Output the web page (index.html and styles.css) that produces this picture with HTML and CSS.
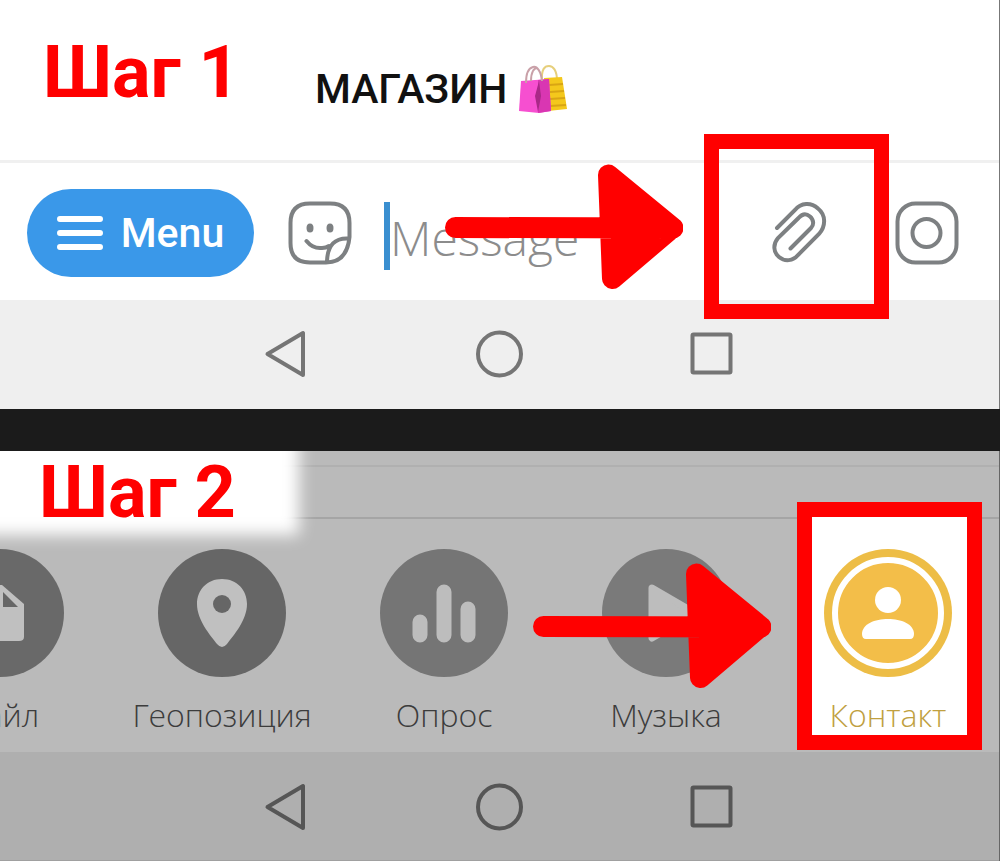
FILE: index.html
```html
<!DOCTYPE html>
<html lang="ru">
<head>
<meta charset="utf-8">
<title>Как отправить контакт</title>
<meta name="viewport" content="width=device-width, initial-scale=1">
<link rel="stylesheet" href="styles.css">
</head>
<body>
<svg class="defs" aria-hidden="true">
  <symbol id="arrow" viewBox="0 0 238 126">
    <path d="M10.500 63.500L228 64M163.500 11L227.500 63.500L167.500 114.500Z" fill="red" stroke="red" stroke-width="21" stroke-linecap="round" stroke-linejoin="round"/>
  </symbol>
  <symbol id="back" viewBox="0 0 48 48"><path d="M4.500 24L40 3V45Z"/></symbol>
  <symbol id="home" viewBox="0 0 48 48"><circle cx="23.500" cy="24" r="21.500"/></symbol>
  <symbol id="recent" viewBox="0 0 48 48"><rect x="4.500" y="4.500" width="38" height="38" rx="1"/></symbol>
</svg>

<main class="guide">
  <section class="panel">
    <header class="chat">
      <h1 class="step">Шаг 1</h1>
      <p class="shop">МАГАЗИН
        <svg class="bags" viewBox="0 0 50 50" role="img" aria-label="Пакеты">
          <path d="M25 19C24 4 28 2 32 2s8 4 8 15" fill="none" stroke="#e6cf7c" stroke-width="2"/>
          <path d="M27 14L45 13L50 45L31 47Z" fill="#f4c81c"/>
          <path d="M32 21l14-1M33 28l14-1M33 35l15-1M33 42l16-1" stroke="#d9a514" stroke-width="2"/>
          <path d="M4 17L32 15L34 47L22 49L2 47Z" fill="#f64fd0"/>
          <path d="M21 16L32 15L34 47L21 49Z" fill="#d936b2"/>
          <path d="M22 17L24 32L21 48L18 32Z" fill="#a92888"/>
          <path d="M9 19C9 8 12 4 16 3s8 4 9 14M14 17C14 8 17 4 20 4" fill="none" stroke="#c9a0a8" stroke-width="2"/>
        </svg>
      </p>
    </header>
    <form class="compose">
      <button class="menu" type="button">
        <svg class="burger" viewBox="0 0 46 36" aria-hidden="true"><path d="M3 4H43M3 18H43M3 32H43"/></svg>
        Menu
      </button>
      <button class="tool sticker" type="button" aria-label="Стикеры">
        <svg viewBox="0 0 64 64"><path d="M22 2.500H42Q61.500 2.500 61.500 22V36Q59 61.500 38 61.500H22Q2.500 61.500 2.500 42V22Q2.500 2.500 22 2.500ZM61 37.500Q40 36 39 60M18.500 40Q25 48 34 47Q38 47 41 45"/><ellipse class="solid" cx="22" cy="27" rx="3.500" ry="4.500"/><ellipse class="solid" cx="42" cy="27" rx="3.500" ry="4.500"/></svg>
      </button>
      <input class="message" type="text" placeholder="Message" aria-label="Message">
      <button class="tool clip" type="button" aria-label="Прикрепить">
        <svg viewBox="0 0 64 64"><path d="M8 27L26 9C32 1.500 42 1 49 7.500C57 14 57 25 50 33L29 54C24 60 16 61 10 56C4 51 4 43 9 37L29.500 17C33 13 37 12 41 15.500C45 19 45 24 42 27L21.500 47.500"/></svg>
      </button>
      <button class="tool" type="button" aria-label="Камера">
        <svg viewBox="0 0 64 64"><rect x="2.500" y="2.500" width="59" height="59" rx="18"/><circle cx="31.500" cy="32" r="14"/></svg>
      </button>
    </form>
    <nav class="system" aria-label="Навигация">
      <button type="button" aria-label="Назад"><svg><use href="#back"/></svg></button>
      <button type="button" aria-label="Домой"><svg><use href="#home"/></svg></button>
      <button type="button" aria-label="Недавние"><svg><use href="#recent"/></svg></button>
    </nav>
    <div class="frame frame-clip"></div>
    <svg class="arrow arrow-clip" aria-hidden="true"><use href="#arrow"/></svg>
  </section>

  <section class="panel dim">
    <div class="strip"></div>
    <div class="bar"></div>
    <div class="label-patch"><h2 class="step">Шаг 2</h2></div>
    <div class="attach">
      <button class="item" type="button">
        <svg class="disc" viewBox="0 0 128 128"><circle cx="64" cy="64" r="64" fill="#696969"/><path d="M47 36H66L88 55V88Q88 92 83 92H46Q40 92 40 87V42Q40 36 47 36Z" fill="#c0c0c0"/><path d="M67 43V58H82Z" fill="#666"/></svg>
        Файл
      </button>
      <button class="item" type="button">
        <svg class="disc" viewBox="0 0 128 128"><circle cx="64" cy="64" r="64" fill="#666"/><path d="M64 30C79 30 89 41 89 55C89 71 76 86 69 95Q64 101 59 95C52 86 39 71 39 55C39 41 49 30 64 30Z" fill="#c0c0c0"/><circle cx="64" cy="55" r="9" fill="#666"/></svg>
        Геопозиция
      </button>
      <button class="item" type="button">
        <svg class="disc" viewBox="0 0 128 128"><circle cx="64" cy="64" r="64" fill="#757575"/><path d="M40 73V86M64 43V86M88 60V86" stroke="#bdbdbd" stroke-width="15" stroke-linecap="round"/></svg>
        Опрос
      </button>
      <button class="item" type="button">
        <svg class="disc" viewBox="0 0 128 128"><circle cx="64" cy="64" r="64" fill="#7a7a7a"/><path d="M50 39L93 64L50 89Z" fill="#bdbdbd" stroke="#bdbdbd" stroke-width="7" stroke-linejoin="round"/></svg>
        Музыка
      </button>
      <button class="item contact" type="button">
        <svg class="disc" viewBox="0 0 128 128"><circle cx="64" cy="64" r="64" fill="#edbd46"/><circle cx="64" cy="64" r="53" fill="#f3be49" stroke="#fff" stroke-width="6"/><circle cx="64" cy="51" r="13" fill="#fff"/><path d="M38 85C38 75 51 70 64 70S90 75 90 85Q90 90 86 90H42Q38 90 38 85Z" fill="#fff"/></svg>
        Контакт
      </button>
    </div>
    <nav class="system" aria-label="Навигация">
      <button type="button" aria-label="Назад"><svg><use href="#back"/></svg></button>
      <button type="button" aria-label="Домой"><svg><use href="#home"/></svg></button>
      <button type="button" aria-label="Недавние"><svg><use href="#recent"/></svg></button>
    </nav>
    <svg class="arrow arrow-contact" aria-hidden="true"><use href="#arrow"/></svg>
  </section>
</main>
</body>
</html>
```
FILE: styles.css
```css
* { box-sizing: border-box; }

body {
  margin: 0;
  background: #1b1b1b;
  font-family: Roboto, "Liberation Sans", sans-serif;
}

button {
  margin: 0;
  padding: 0;
  border: 0;
  background: none;
  font: inherit;
  color: inherit;
}

svg { display: block; }

.defs { position: absolute; width: 0; height: 0; }

.guide { display: grid; gap: 42px; }

.panel {
  position: relative;
  overflow: hidden;
  background: #fff;
  border-right: 1px solid #777;
}

.dim { background: #bababa; border-color: #666; }

.step {
  margin: 0;
  font-size: 72px;
  line-height: 88px;
  font-weight: 700;
  color: red;
  white-space: nowrap;
}

.chat {
  display: flex;
  align-items: flex-start;
  gap: 75px;
  padding: 29px 43px 43px;
  border-bottom: 3px solid #f0f0f0;
}

.shop {
  display: flex;
  align-items: center;
  gap: 10px;
  margin: 35px 0 0;
  font-size: 41px;
  line-height: 50px;
  font-weight: 500;
  color: #111;
}

.bags { width: 50px; height: 50px; }

.compose {
  display: flex;
  align-items: center;
  padding: 26px 40px 23px 27px;
}

.menu {
  display: flex;
  align-items: center;
  justify-content: center;
  gap: 18px;
  width: 227px;
  height: 88px;
  border-radius: 44px;
  background: #3a98e9;
  font-size: 41px;
  font-weight: 500;
  color: #fff;
}

.burger { width: 46px; height: 36px; stroke: #fff; stroke-width: 6; stroke-linecap: round; }

.tool svg {
  width: 64px;
  height: 64px;
  fill: none;
  stroke: #7d8082;
  stroke-width: 4;
  stroke-linecap: round;
}

.tool .solid { fill: #7d8082; stroke: none; }

.sticker { margin-left: 34px; }

.clip { margin-right: 62px; }

.message {
  flex: 1;
  min-width: 0;
  height: 68px;
  margin: 6px 40px 0 32px;
  padding: 2px 0 0;
  border: 0;
  border-left: 6px solid #3a8fd0;
  background: none;
  font-family: "Open Sans", "Noto Sans", sans-serif;
  font-size: 48px;
  font-weight: 300;
  color: #333;
  outline: 0;
}

.message::placeholder { color: #8c8c8c; opacity: 1; }

.system {
  display: grid;
  grid-template-columns: repeat(3, 21.3%);
  justify-content: center;
  justify-items: center;
  padding: 30px 0 31px;
  background: #efefef;
}

.system svg {
  width: 48px;
  height: 48px;
  fill: none;
  stroke: #757575;
  stroke-width: 4;
  stroke-linejoin: round;
}

.dim .system { padding: 31px 0 29px; background: #afafaf; border-bottom: 2px solid #a0a0a0; }

.dim .system svg { stroke: #565656; }

.strip { height: 16px; border-bottom: 2px solid #b0b0b0; }

.bar { height: 52px; border-bottom: 2px solid #a5a5a5; }

.label-patch {
  position: absolute;
  top: 0;
  left: 0;
  width: 299px;
  height: 84px;
  padding-left: 39px;
}

.label-patch::before {
  content: "";
  position: absolute;
  inset: -20px 0 0 -20px;
  background: #fff;
  filter: blur(8px);
}

.label-patch .step { position: relative; line-height: 84px; }

.attach {
  display: grid;
  grid-template-columns: repeat(5, 20%);
  width: 111.1%;
  margin-left: -11.1%;
  padding: 30px 0 15px;
  font-family: "Open Sans", "Noto Sans", sans-serif;
  font-size: 32px;
  line-height: 44px;
  font-weight: 300;
  color: #3c3c3c;
}

.item {
  position: relative;
  display: grid;
  justify-items: center;
  gap: 16px;
}

.disc { width: 128px; height: 128px; }

.contact { color: #c0a040; z-index: 0; }

.contact::before {
  content: "";
  position: absolute;
  z-index: -1;
  inset: -47px 17px -13px 20px;
  border: 15px solid red;
  background: #fff;
}

.frame {
  position: absolute;
  border: 15px solid red;
}

.frame-clip { top: 134px; right: 110px; width: 185px; height: 185px; }

.arrow { position: absolute; width: 238px; height: 126px; }

.arrow-clip { top: 164px; left: 44.5%; }

.arrow-contact { top: 112px; left: 53.4%; }
```
